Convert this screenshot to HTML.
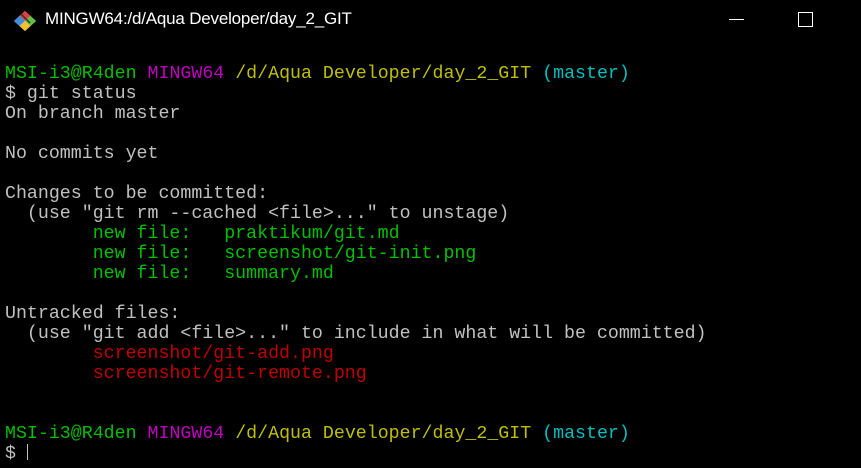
<!DOCTYPE html>
<html><head><style>
html,body{margin:0;padding:0;background:#000;width:861px;height:468px;overflow:hidden}
.title{position:absolute;left:45px;top:9px;color:#fff;font:17px "Liberation Sans",sans-serif;letter-spacing:-0.2px}
pre{position:absolute;left:5px;top:64px;margin:0;font:18.27px/20px "Liberation Mono",monospace;color:#c0c0c0}
.g{color:#00bf00}.m{color:#bf00bf}.y{color:#bfbf00}.c{color:#00bfbf}.r{color:#bf0000}
.cur{display:inline-block;width:1px;height:16px;background:#c0c0c0;vertical-align:-2px}
</style></head><body>
<svg style="position:absolute;left:13px;top:10px" width="24" height="22" viewBox="0 0 24 22">
<polygon points="12,1 23,11 12,21 1,11" fill="#e8e8e8"/>
<polygon points="12,1 17.5,6 12,11 6.5,6" fill="#e04040"/>
<polygon points="1,11 6.5,6 12,11 6.5,16" fill="#3c8ee0"/>
<polygon points="12,11 17.5,6 23,11 17.5,16" fill="#60c040"/>
<polygon points="12,11 17.5,16 12,21 6.5,16" fill="#f0c030"/>
<line x1="8" y1="4" x2="14" y2="10" stroke="#333" stroke-width="1.5"/>
<line x1="14" y1="10" x2="17" y2="13" stroke="#333" stroke-width="1.5"/>
</svg>
<div class="title">MINGW64:/d/Aqua Developer/day_2_GIT</div>
<div style="position:absolute;left:729px;top:19px;width:15px;height:1px;background:#fff"></div>
<div style="position:absolute;left:798px;top:12px;width:13px;height:13px;border:1px solid #fff"></div>
<pre><span class="g">MSI-i3@R4den</span> <span class="m">MINGW64</span> <span class="y">/d/Aqua Developer/day_2_GIT</span> <span class="c">(master)</span>
$ git status
On branch master

No commits yet

Changes to be committed:
  (use "git rm --cached &lt;file&gt;..." to unstage)
<span class="g">        new file:   praktikum/git.md
        new file:   screenshot/git-init.png
        new file:   summary.md</span>

Untracked files:
  (use "git add &lt;file&gt;..." to include in what will be committed)
<span class="r">        screenshot/git-add.png
        screenshot/git-remote.png</span>


<span class="g">MSI-i3@R4den</span> <span class="m">MINGW64</span> <span class="y">/d/Aqua Developer/day_2_GIT</span> <span class="c">(master)</span>
$ <span class="cur"></span></pre>
</body></html>
